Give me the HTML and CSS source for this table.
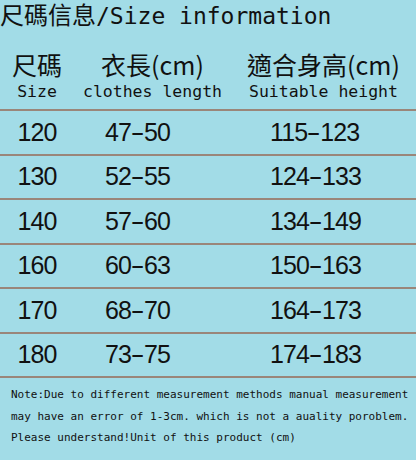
FILE: index.html
```html
<!DOCTYPE html>
<html lang="zh-Hant">
<head>
<meta charset="utf-8">
<title>尺碼信息</title>
<link rel="stylesheet" href="styles.css">
</head>
<body>
<div class="page">
  <div class="title"><span class="cjk">尺碼信息</span><span class="mono">/Size information</span></div>
  <div class="head">
    <div class="hcell"><div class="zh">尺碼</div><div class="en">Size</div></div>
    <div class="hcell"><div class="zh">衣長(cm)</div><div class="en">clothes length</div></div>
    <div class="hcell"><div class="zh">適合身高(cm)</div><div class="en">Suitable height</div></div>
  </div>
  <div class="row"><div class="c1">120</div><div class="c2">47<span class="dash">-</span>50</div><div class="c3">115<span class="dash">-</span>123</div></div>
  <div class="row"><div class="c1">130</div><div class="c2">52<span class="dash">-</span>55</div><div class="c3">124<span class="dash">-</span>133</div></div>
  <div class="row"><div class="c1">140</div><div class="c2">57<span class="dash">-</span>60</div><div class="c3">134<span class="dash">-</span>149</div></div>
  <div class="row"><div class="c1">160</div><div class="c2">60<span class="dash">-</span>63</div><div class="c3">150<span class="dash">-</span>163</div></div>
  <div class="row"><div class="c1">170</div><div class="c2">68<span class="dash">-</span>70</div><div class="c3">164<span class="dash">-</span>173</div></div>
  <div class="row"><div class="c1">180</div><div class="c2">73<span class="dash">-</span>75</div><div class="c3">174<span class="dash">-</span>183</div></div>
  <div class="note">Note:Due to different measurement methods manual measurement<br>may have an error of 1-3cm. which is not a auality poroblem.<br>Please understand!Unit of this product (cm)</div>
</div>
</body>
</html>
```
FILE: styles.css
```css
html, body {
  margin: 0;
  padding: 0;
  background: #a2dce7;
}
body {
  width: 416px;
  height: 460px;
  overflow: hidden;
  color: #111;
  font-family: "Noto Sans CJK TC", "Noto Sans", sans-serif;
}
.page {
  display: flex;
  flex-direction: column;
}
.title {
  height: 27px;
  line-height: 27px;
  white-space: nowrap;
}
.title .cjk {
  font-family: "Noto Sans CJK TC", sans-serif;
  font-size: 24px;
}
.title .mono {
  font-family: "DejaVu Sans Mono", monospace;
  font-size: 23px;
}
.head {
  display: grid;
  grid-template-columns: 74px 157px 1fr;
  margin-top: 19px;
  padding-bottom: 7px;
  border-bottom: 2px solid #9a867a;
}
.hcell {
  text-align: center;
  white-space: nowrap;
}
.hcell .zh {
  font-family: "Noto Sans CJK TC", sans-serif;
  font-size: 25px;
  line-height: 36px;
  height: 36px;
}
.hcell .en {
  font-family: "DejaVu Sans Mono", monospace;
  font-size: 16.5px;
  line-height: 20px;
  height: 20px;
}
.row {
  display: grid;
  grid-template-columns: 74px 157px 1fr;
  align-items: center;
  height: 42.5px;
  border-bottom: 2px solid #9a867a;
  font-family: "Liberation Sans", Arial, sans-serif;
  font-size: 25px;
  letter-spacing: -0.9px;
  white-space: nowrap;
}
.c1 {
  text-align: center;
}
.c2 {
  padding-left: 31px;
}
.c3 {
  padding-left: 39px;
}
.dash {
  display: inline-block;
  width: 13px;
  text-align: center;
  transform: scaleX(1.7);
  letter-spacing: 0;
}
.note {
  font-family: "DejaVu Sans Mono", monospace;
  font-size: 11px;
  line-height: 21.5px;
  padding-top: 6px;
  padding-left: 11px;
  white-space: nowrap;
  color: #111;
}
```
